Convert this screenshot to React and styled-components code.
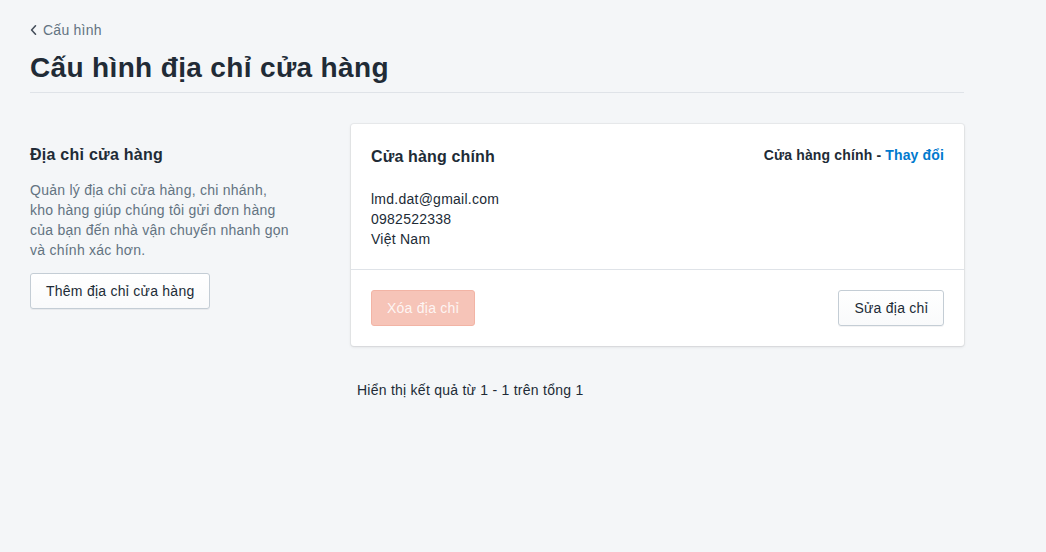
import React from "react";
import styled, { createGlobalStyle } from "styled-components";

const Global = createGlobalStyle`
  html, body { margin: 0; padding: 0; background: #f4f6f8; }
  body {
    font-family: "Liberation Sans", Arial, sans-serif;
    color: #212b36;
    letter-spacing: 0.25px;
    -webkit-font-smoothing: antialiased;
  }
  * { box-sizing: border-box; }
`;

const Page = styled.div`
  width: 934px;
  margin-left: 30px;
  padding-top: 20px;
  min-height: 552px;
`;

const Header = styled.header`
  border-bottom: 1px solid #dfe3e8;
  padding-bottom: 8px;
`;

const Breadcrumb = styled.a`
  display: inline-flex;
  align-items: center;
  gap: 6px;
  font-size: 14px;
  line-height: 20px;
  color: #637381;
  text-decoration: none;
  cursor: pointer;
  svg { display: block; }
`;

const Title = styled.h1`
  margin: 12px 0 0;
  font-size: 28px;
  line-height: 32px;
  font-weight: 700;
  letter-spacing: 0.35px;
  color: #212b36;
`;

const Section = styled.section`
  display: flex;
  gap: 31px;
  margin-top: 31px;
  align-items: flex-start;
`;

const Annotation = styled.div`
  width: 290px;
  flex-shrink: 0;
  padding-top: 19px;
`;

const AnnoHeading = styled.h2`
  margin: 0;
  font-size: 16px;
  line-height: 24px;
  font-weight: 700;
`;

const AnnoText = styled.p`
  margin: 13px 0 0;
  width: 262px;
  font-size: 14px;
  line-height: 20px;
  color: #637381;
`;

const Button = styled.button`
  font-family: inherit;
  font-size: 14px;
  line-height: 20px;
  letter-spacing: 0.25px;
  height: 36px;
  padding: 0 15px;
  border-radius: 3px;
  cursor: pointer;
  border: 1px solid #c4cdd5;
  color: #212b36;
  background: linear-gradient(180deg, #fff, #f9fafb);
  box-shadow: 0 1px 0 0 rgba(22, 29, 37, 0.05);
  margin-top: ${(p) => p.$mt || 0}px;

  &:disabled {
    cursor: default;
    background: #f6c4b8;
    border-color: #f2b4a5;
    color: rgba(255, 255, 255, 0.85);
    box-shadow: none;
  }
`;

const Main = styled.div`
  flex: 1;
`;

const Card = styled.div`
  background: #fff;
  border-radius: 3px;
  box-shadow: 0 0 0 1px rgba(63, 63, 68, 0.05), 0 1px 3px 0 rgba(63, 63, 68, 0.15);
`;

const CardBody = styled.div`
  padding: 20px;
`;

const CardHead = styled.div`
  display: flex;
  justify-content: space-between;
  align-items: flex-start;
`;

const CardTitle = styled.h3`
  margin: 1px 0 0;
  font-size: 16px;
  line-height: 24px;
  font-weight: 700;
  letter-spacing: 0.15px;
`;

const Primary = styled.div`
  font-size: 14px;
  line-height: 20px;
  font-weight: 700;
  letter-spacing: 0.15px;
  margin-top: 1px;
`;

const Link = styled.a`
  color: #007ace;
  cursor: pointer;
`;

const Contact = styled.div`
  margin-top: 20px;
  font-size: 14px;
  line-height: 20px;
  color: #212b36;
`;

const CardFooter = styled.div`
  border-top: 1px solid #dfe3e8;
  padding: 20px;
  display: flex;
  justify-content: space-between;
`;

const Summary = styled.p`
  margin: 34px 0 0 6px;
  font-size: 14px;
  line-height: 20px;
  color: #212b36;
`;

export default function App() {
  return (
    <>
      <Global />
      <Page>
        <Header>
          <Breadcrumb>
            <svg width="7" height="12" viewBox="0 0 7 12">
              <path d="M5.5 1.8 L1.6 6 L5.5 10.2" fill="none" stroke="#454f5b" strokeWidth="1.6" strokeLinecap="round" strokeLinejoin="round" />
            </svg>
            Cấu hình
          </Breadcrumb>
          <Title>Cấu hình địa chỉ cửa hàng</Title>
        </Header>
        <Section>
          <Annotation>
            <AnnoHeading>Địa chỉ cửa hàng</AnnoHeading>
            <AnnoText>
              Quản lý địa chỉ cửa hàng, chi nhánh, kho hàng giúp chúng tôi gửi đơn hàng của bạn đến nhà vận chuyển nhanh gọn và chính xác hơn.
            </AnnoText>
            <Button $mt={13}>Thêm địa chỉ cửa hàng</Button>
          </Annotation>
          <Main>
            <Card>
              <CardBody>
                <CardHead>
                  <CardTitle>Cửa hàng chính</CardTitle>
                  <Primary>
                    Cửa hàng chính - <Link>Thay đổi</Link>
                  </Primary>
                </CardHead>
                <Contact>
                  <div>lmd.dat@gmail.com</div>
                  <div>0982522338</div>
                  <div>Việt Nam</div>
                </Contact>
              </CardBody>
              <CardFooter>
                <Button disabled>Xóa địa chỉ</Button>
                <Button>Sửa địa chỉ</Button>
              </CardFooter>
            </Card>
            <Summary>Hiển thị kết quả từ 1 - 1 trên tổng 1</Summary>
          </Main>
        </Section>
      </Page>
    </>
  );
}
